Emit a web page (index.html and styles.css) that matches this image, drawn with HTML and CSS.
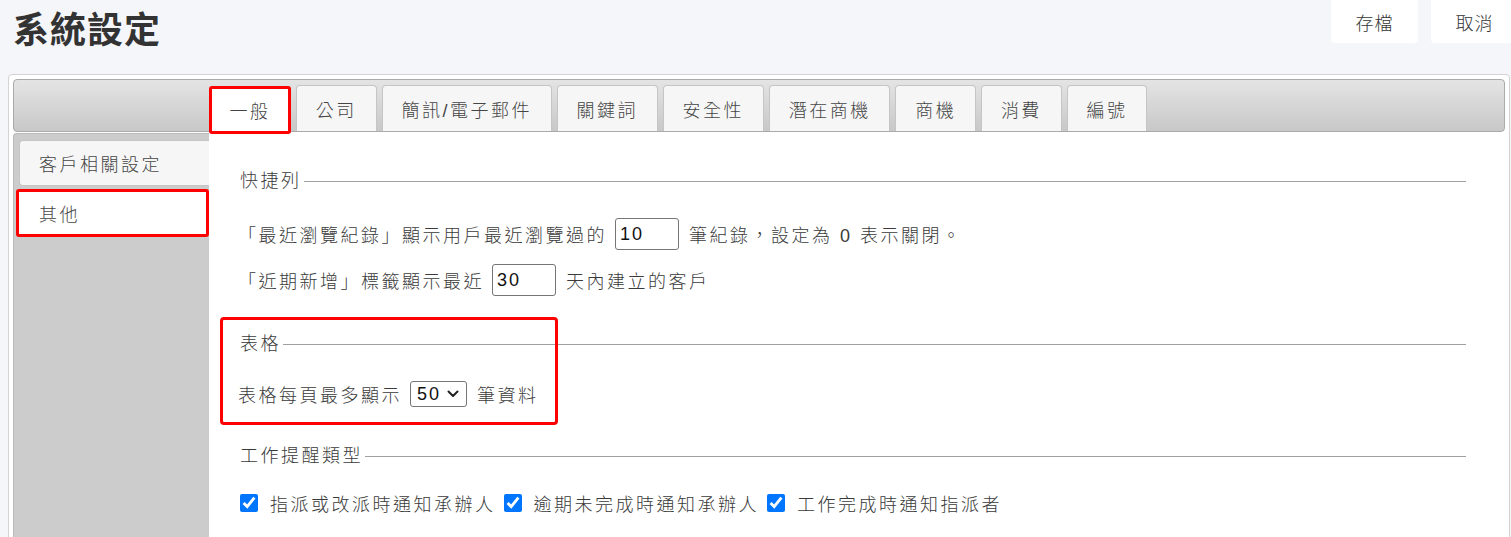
FILE: index.html
```html
<!DOCTYPE html>
<html>
  <head>
    <meta charset="utf-8">
    <title>系統設定</title>
    <link rel="stylesheet" href="styles.css">
  </head>
  <body>
    <div class="topbar">
      <h1 class="page-title">系統設定</h1>
      <div class="actions">
        <button class="btn">存檔</button>
        <button class="btn">取消</button>
      </div>
    </div>

    <div class="panel">
      <ul class="tabs">
        <li class="tab active">一般</li>
        <li class="tab">公司</li>
        <li class="tab">簡訊/電子郵件</li>
        <li class="tab">關鍵詞</li>
        <li class="tab">安全性</li>
        <li class="tab">潛在商機</li>
        <li class="tab">商機</li>
        <li class="tab">消費</li>
        <li class="tab">編號</li>
      </ul>

      <div class="panel-body">
        <ul class="side-nav">
          <li class="side-item">客戶相關設定</li>
          <li class="side-item active">其他</li>
        </ul>

        <div class="content">
          <fieldset class="group group-quick">
            <legend>快捷列</legend>
            <div class="row">「最近瀏覽紀錄」顯示用戶最近瀏覽過的<input class="num" type="text" value="10">筆紀錄，設定為 0 表示關閉。</div>
            <div class="row">「近期新增」標籤顯示最近<input class="num" type="text" value="30">天內建立的客戶</div>
          </fieldset>

          <div class="hl-wrap">
            <fieldset class="group group-table">
              <legend>表格</legend>
              <div class="row">表格每頁最多顯示<span class="select">
                  <select>
                    <option>10</option>
                    <option>20</option>
                    <option selected>50</option>
                    <option>100</option>
                  </select>
                  <svg class="chev" width="12" height="8" viewBox="0 0 12 8" fill="none" stroke="#222" stroke-width="2" stroke-linecap="round" stroke-linejoin="round">
                    <polyline points="1.5 1.5 6 6 10.5 1.5" />
                  </svg>
                </span>筆資料</div>
            </fieldset>
            <div class="hl"></div>
          </div>

          <fieldset class="group group-remind">
            <legend>工作提醒類型</legend>
            <div class="row">
              <label class="check"><input type="checkbox" checked>指派或改派時通知承辦人</label>
              <label class="check"><input type="checkbox" checked>逾期未完成時通知承辦人</label>
              <label class="check"><input type="checkbox" checked>工作完成時通知指派者</label>
            </div>
          </fieldset>
        </div>
      </div>
    </div>
  </body>
</html>
```

FILE: styles.css
```css
* {
  box-sizing: border-box;
}
body {
  margin: 0;
  height: 537px;
  overflow: hidden;
  background: #f5f6fa;
  color: #3a3a3a;
  font-family: "Liberation Sans", "Noto Sans CJK TC", sans-serif;
  font-size: 18px;
  font-weight: 300;
  letter-spacing: 2.5px;
}

/* header */
.topbar {
  display: flex;
  justify-content: space-between;
  align-items: flex-start;
  height: 74px;
  padding-left: 13px;
}
.page-title {
  margin: 0;
  padding-top: 13px;
  font-size: 36px;
  line-height: 36px;
  letter-spacing: 1px;
  font-weight: 700;
  color: #333;
}
.actions {
  display: flex;
  gap: 13px;
  margin-top: -4px;
  margin-right: -7px;
}
.btn {
  width: 87px;
  height: 47px;
  padding: 4px 0 0;
  border: none;
  border-radius: 4px;
  background: #fff;
  color: #333;
  font: inherit;
  letter-spacing: 1px;
  cursor: pointer;
}

/* tabs panel */
.panel {
  height: 500px;
  margin: 0 1px 0 8px;
  padding: 4px;
  border: 1px solid #d3d3d3;
  border-radius: 4px;
  background: #fff;
}
.tabs {
  list-style: none;
  margin: 0;
  height: 53px;
  padding: 0 0 0 195px;
  display: flex;
  align-items: flex-end;
  gap: 5px;
  border: 1px solid #aaa;
  border-radius: 4px;
  background: linear-gradient(#e4e4e4, #c8c8c8);
}
.tab {
  height: 46px;
  padding: 0 18.8px;
  display: flex;
  align-items: center;
  border: 1px solid #c5c5c5;
  border-bottom: none;
  border-radius: 4px 4px 0 0;
  background: #f6f6f6;
  color: #454545;
  white-space: nowrap;
}
.tab.active {
  position: relative;
  height: 48px;
  margin-bottom: -3px;
  padding: 0 17.5px;
  border: 3px solid #f00;
  border-radius: 3px;
  background: #fff;
}

.panel-body {
  display: flex;
  height: 440px;
}
.side-nav {
  list-style: none;
  width: 196px;
  flex-shrink: 0;
  margin: 1px 0 0;
  padding: 6px 0 0;
  border-top: 1px solid #bbb;
  border-left: 1px solid #bbb;
  border-radius: 4px 0 0 0;
  background: #ccc;
}
.side-item {
  height: 46px;
  margin-left: 5px;
  padding-left: 19px;
  display: flex;
  align-items: center;
  border: 1px solid #c5c5c5;
  border-right: none;
  border-radius: 4px 0 0 4px;
  background: #f6f6f6;
  color: #454545;
}
.side-item.active {
  height: 48px;
  margin: 3px 0 0 2px;
  padding-left: 20px;
  border: 3px solid #f00;
  border-radius: 3px;
  background: #fff;
}

/* settings content */
.content {
  flex: 1;
  padding: 37px 39px 0 29px;
}
.group {
  margin: 0;
  padding: 0;
  min-width: 0;
  border: none;
  border-top: 1px solid #a0a0a0;
}
.group legend {
  padding: 0 2px;
  line-height: 24px;
}
.row {
  display: flex;
  align-items: center;
  height: 32px;
  margin-top: 14px;
  white-space: nowrap;
}
.group-quick .row:first-of-type {
  margin-top: 25px;
}
.group-table .row {
  margin-top: 22px;
}
.group-remind {
  margin-top: 34px;
}
.group-remind .row {
  margin-top: 19px;
}

.hl-wrap {
  position: relative;
  margin-top: 36px;
}
.hl {
  position: absolute;
  left: -18px;
  top: -15px;
  width: 338px;
  height: 108px;
  border: 3px solid #f00;
  border-radius: 4px;
  pointer-events: none;
}

.num {
  width: 64px;
  height: 32px;
  margin: 0 10px 0 8px;
  padding: 0 4px;
  border: 1px solid #767676;
  border-radius: 3px;
  color: #111;
  font: 18px "Liberation Sans", sans-serif;
  letter-spacing: 2px;
}
.select {
  position: relative;
  display: inline-flex;
  margin: 0 10px 0 8px;
}
.select select {
  appearance: none;
  width: 57px;
  height: 26px;
  padding: 0 0 0 6px;
  border: 1px solid #767676;
  border-radius: 3px;
  background: #fff;
  color: #111;
  font: 18px "Liberation Sans", sans-serif;
  letter-spacing: 2px;
}
.chev {
  position: absolute;
  right: 8px;
  top: 9px;
  pointer-events: none;
}

.check {
  display: inline-flex;
  align-items: center;
  gap: 12px;
  margin-right: 6px;
}
.check input {
  width: 18px;
  height: 18px;
  margin: 0 0 0 2px;
  accent-color: #0075ff;
}
```
